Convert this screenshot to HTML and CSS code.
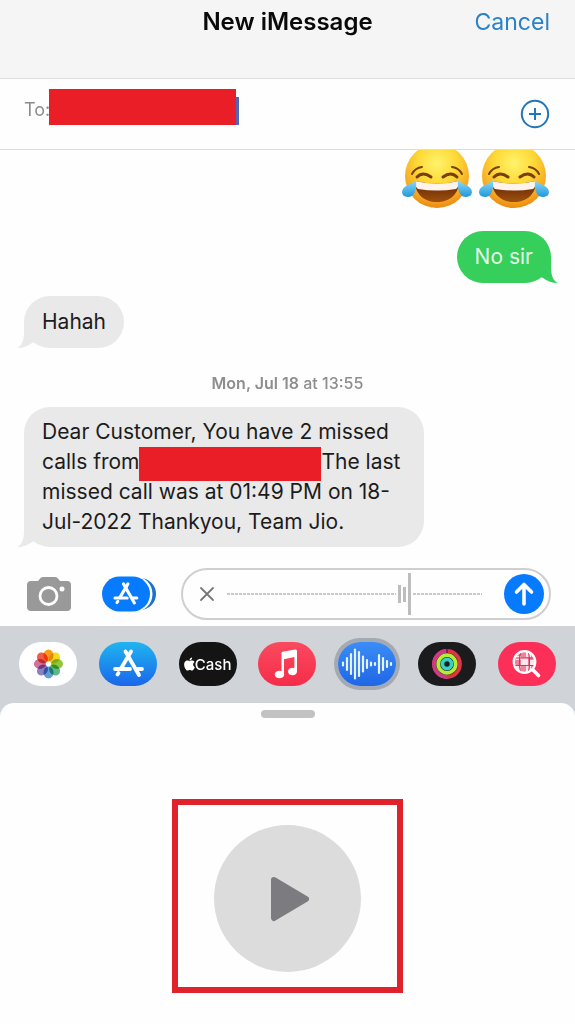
FILE: index.html
```html
<!doctype html>
<html lang="en">
  <head>
    <meta charset="UTF-8" />
    <meta name="viewport" content="width=device-width, initial-scale=1.0" />
    <title>New iMessage</title>
    <link rel="stylesheet" href="styles.css">
  </head>
  <body>
    <!-- shared shapes -->
    <svg class="defs" width="0" height="0" aria-hidden="true">
      <defs>
        <radialGradient id="face" cx="50%" cy="30%" r="72%">
          <stop offset="0" stop-color="#fff36b" />
          <stop offset="0.45" stop-color="#fdd835" />
          <stop offset="0.8" stop-color="#f6a623" />
          <stop offset="1" stop-color="#e8850c" />
        </radialGradient>
        <linearGradient id="tear" x1="0" y1="0" x2="0" y2="1">
          <stop offset="0" stop-color="#8fdcf8" />
          <stop offset="1" stop-color="#1f97dc" />
        </linearGradient>
        <linearGradient id="mouth" x1="0" y1="0" x2="0" y2="1">
          <stop offset="0" stop-color="#5e2606" />
          <stop offset="1" stop-color="#a04f0c" />
        </linearGradient>
      </defs>
      <symbol id="joy" viewBox="0 0 70 66">
        <circle cx="35" cy="33" r="32" fill="url(#face)" />
        <g fill="none" stroke="#7a3e06" stroke-linecap="round">
          <path d="M10 31Q13 25 20 24M50 24Q57 25 60 31" stroke-width="2" />
          <path d="M15 34Q21 28 29 34M41 34Q49 28 55 34" stroke-width="3" />
        </g>
        <path d="M13 38Q35 43 57 38C57 51 48 59 35 59S13 51 13 38Z" fill="url(#mouth)" />
        <path d="M13 38Q35 43 57 38Q57 44 54 46Q35 49 16 46Q13 44 13 38Z" fill="#fff3ec" />
        <path d="M14 37C15 47 12 54 6 54C0 54 -1 49 1 46C4 41 10 42 14 37Z" fill="url(#tear)" />
        <path d="M56 37C55 47 58 54 64 54C70 54 71 49 69 46C66 41 60 42 56 37Z" fill="url(#tear)" />
      </symbol>
      <symbol id="store" viewBox="0 0 58 44">
        <g fill="none" stroke="#fff" stroke-width="3.8" stroke-linecap="round">
          <path d="M26.5 9.5L40 33" />
          <path d="M32 9.500L22 26.500" />
          <path d="M19.500 31L18.500 32.500" />
          <path d="M16 27H31M38 27H43" />
        </g>
      </symbol>
      <symbol id="tail" viewBox="0 0 22 30">
        <path d="M7 2V13C7 21 5 27 0 29C6 29 11 27 15 24L20 22V2Z" />
      </symbol>
    </svg>

    <header class="header">
      <h1 class="title">New iMessage</h1>
      <button type="button" class="cancel">Cancel</button>
    </header>

    <div class="to-row">
      <label class="to-label" for="recipient">To:</label>
      <span class="redacted redacted-to"></span>
      <span class="caret"></span>
      <input class="recipient" id="recipient" type="text" />
      <button type="button" class="add" aria-label="Add contact">
        <svg width="30" height="30" viewBox="0 0 30 30" fill="none" stroke="#2377b8" stroke-width="2">
          <circle cx="15" cy="15" r="13.200" />
          <path d="M15 9V21M9 15H21" />
        </svg>
      </button>
    </div>

    <main class="thread">
      <div class="emoji-row">
        <svg width="70" height="66"><use href="#joy" /></svg>
        <svg width="70" height="66"><use href="#joy" /></svg>
      </div>

      <p class="bubble sent">
        No sir
        <svg class="tail" width="22" height="30" viewBox="0 0 22 30" fill="#37cf5c" aria-hidden="true">
          <path d="M15 2V13C15 21 17 27 22 29C16 29 11 27 7 24L2 22V2Z" />
        </svg>
      </p>

      <p class="bubble received">
        Hahah
        <svg class="tail" width="22" height="30" fill="#e9e9e9" aria-hidden="true"><use href="#tail" /></svg>
      </p>

      <p class="date"><strong>Mon, Jul 18</strong> at 13:55</p>

      <p class="bubble received long">
        Dear Customer, You have 2 missed<br />
        calls from<span class="redacted redacted-number"></span>The last<br />
        missed call was at 01:49 PM on 18-<br />
        Jul-2022 Thankyou, Team Jio.
        <svg class="tail" width="22" height="30" fill="#e9e9e9" aria-hidden="true"><use href="#tail" /></svg>
      </p>
    </main>

    <div class="compose">
      <button type="button" class="icon-button" aria-label="Camera">
        <svg width="44" height="36" viewBox="0 0 44 36">
          <path d="M4 5H11L14 1.500Q15 1 16 1H28Q29 1 30 1.500L33 5H40Q44 5 44 9V31Q44 35 40 35H4Q0 35 0 31V9Q0 5 4 5Z" fill="#999" />
          <circle cx="21.500" cy="20" r="8.500" fill="none" stroke="#fff" stroke-width="2.800" />
          <circle cx="35" cy="13" r="2.500" fill="#fff" />
        </svg>
      </button>
      <button type="button" class="icon-button" aria-label="Apps">
        <svg width="54" height="36" viewBox="0 0 54 36">
          <rect x="18" y="2" width="36" height="32" rx="16" fill="#1a6fd0" />
          <rect x="0" y="0" width="50.500" height="36" rx="18" fill="#fefefe" />
          <rect x="0" y="0.500" width="48" height="35" rx="17.500" fill="#077bff" />
          <use href="#store" x="0" y="0" width="47" height="36" />
        </svg>
      </button>
      <div class="recorder">
        <button type="button" class="icon-button" aria-label="Discard">
          <svg width="16" height="16" viewBox="0 0 16 16" fill="none" stroke="#777" stroke-width="1.800" stroke-linecap="round">
            <path d="M2 2L14 14M14 2L2 14" />
          </svg>
        </button>
        <div class="wave">
          <span class="dash before"></span>
          <span class="bar"></span>
          <span class="bar small"></span>
          <span class="bar playhead"></span>
          <span class="dash after"></span>
        </div>
        <button type="button" class="icon-button" aria-label="Send">
          <svg width="40" height="40" viewBox="0 0 40 40">
            <circle cx="20" cy="20" r="20" fill="#077bff" />
            <path d="M20 30V11M12.500 18L20 10.500L27.500 18" fill="none" stroke="#fff" stroke-width="3.600" stroke-linecap="round" stroke-linejoin="round" />
          </svg>
        </button>
      </div>
    </div>

    <nav class="apps">
      <button type="button" class="app photos" aria-label="Photos">
        <svg width="58" height="44" viewBox="0 0 58 44">
          <g class="petals" transform="translate(29.500 22)">
            <ellipse cy="-8.500" rx="5" ry="6" fill="#f79a1a" />
            <ellipse cy="-8.500" rx="5" ry="6" fill="#f0dc20" transform="rotate(45)" />
            <ellipse cy="-8.500" rx="5" ry="6" fill="#8fc63c" transform="rotate(90)" />
            <ellipse cy="-8.500" rx="5" ry="6" fill="#5cb888" transform="rotate(135)" />
            <ellipse cy="-8.500" rx="5" ry="6" fill="#5f9fd4" transform="rotate(180)" />
            <ellipse cy="-8.500" rx="5" ry="6" fill="#8a80c4" transform="rotate(225)" />
            <ellipse cy="-8.500" rx="5" ry="6" fill="#d0709f" transform="rotate(270)" />
            <ellipse cy="-8.500" rx="5" ry="6" fill="#f05c44" transform="rotate(315)" />
          </g>
        </svg>
      </button>
      <button type="button" class="app store" aria-label="App Store">
        <svg width="58" height="44"><use href="#store" /></svg>
      </button>
      <button type="button" class="app cash">
        <svg width="11" height="14" viewBox="2 0 20 24" aria-hidden="true">
          <path fill="#fff" d="M12.152 6.896c-.948 0-2.415-1.078-3.960-1.040-2.040.027-3.910 1.183-4.961 3.014-2.117 3.675-.546 9.103 1.519 12.090 1.013 1.454 2.208 3.090 3.792 3.039 1.520-.065 2.090-.987 3.935-.987 1.831 0 2.350.987 3.960.948 1.637-.026 2.676-1.480 3.676-2.948 1.156-1.688 1.636-3.325 1.662-3.415-.039-.013-3.182-1.221-3.220-4.857-.026-3.040 2.480-4.494 2.597-4.559-1.429-2.090-3.623-2.324-4.390-2.376-2-.156-3.675 1.090-4.610 1.090zM15.530 3.830c.843-1.012 1.400-2.427 1.245-3.830-1.207.052-2.662.805-3.532 1.818-.780.896-1.454 2.338-1.273 3.714 1.338.104 2.715-.688 3.559-1.701" />
        </svg>
        Cash
      </button>
      <button type="button" class="app music" aria-label="Music">
        <svg width="58" height="44" viewBox="0 0 58 44">
          <path d="M23.500 11Q23.500 10 24.500 9.700L37 7.500Q39 7 39 9V29H36.400V15L26 17.200V32H23.500Z" fill="#fff" />
          <ellipse cx="21.500" cy="32.500" rx="4.700" ry="3.800" fill="#fff" />
          <ellipse cx="34.500" cy="29.500" rx="4.500" ry="3.800" fill="#fff" />
        </svg>
      </button>
      <button type="button" class="app audio" aria-label="Audio message">
        <svg width="58" height="44" viewBox="0 0 58 44" fill="none" stroke="#e2f4ff" stroke-width="2.200" stroke-linecap="round">
          <path d="M5 20.500V23.500M9 16V28M13 12V32M17 7.500V36.500M21 10V34M25 14.500V29.500M29 18V26M33 20.500V23.500M37 21V23M41 13V31M45 16V28M49 19V25M53 21V23" />
        </svg>
      </button>
      <button type="button" class="app activity" aria-label="Activity">
        <svg width="58" height="44" viewBox="0 0 58 44" fill="none" stroke-width="3.800">
          <circle cx="29" cy="22" r="13" stroke="#df3442" />
          <path d="M29 9A13 13 0 0 0 29 35" stroke="#cc3c86" />
          <path d="M29 7V12" stroke="#1b1b1d" stroke-width="1" />
          <circle cx="29" cy="22" r="8.800" stroke="#b5ec3a" />
          <circle cx="29" cy="22" r="4.600" stroke="#35d3c4" />
        </svg>
      </button>
      <button type="button" class="app images" aria-label="Image search">
        <svg width="58" height="44" viewBox="0 0 58 44" fill="none">
          <circle cx="26.500" cy="20" r="10.800" fill="#f0839b" />
          <path d="M18 14H23V18H18ZM28 10H33V15H28ZM23 16H30V23H23ZM31 18H37V23H31ZM18 24H23V28H18ZM28 24H33V30H28Z" fill="#ffe6ec" />
          <path d="M16 16H37M16 23.500H37M22.500 10Q20.500 20 22.500 30M30.500 10Q32.500 20 30.500 30" stroke="#d53358" stroke-width="1.200" />
          <circle cx="26.500" cy="20" r="10.800" stroke="#fff" stroke-width="2.200" />
          <path d="M35 28L40.500 33.500" stroke="#fff" stroke-width="3.600" stroke-linecap="round" />
        </svg>
      </button>
    </nav>

    <section class="panel">
      <span class="handle"></span>
      <div class="highlight">
        <button type="button" class="play" aria-label="Play">
          <svg width="44" height="48" viewBox="0 0 44 48">
            <path d="M6 5L38 24L6 43Z" fill="#7c7b80" stroke="#7c7b80" stroke-width="6" stroke-linejoin="round" />
          </svg>
        </button>
      </div>
    </section>
  </body>
</html>
```
FILE: styles.css
```css
* {
  margin: 0;
  padding: 0;
  box-sizing: border-box;
}

body {
  font-family: Inter, "Liberation Sans", sans-serif;
  background-color: #d0d3d7;
  color: #1c1c1c;
  display: flex;
  flex-direction: column;
  min-height: 100vh;
}

button {
  background: none;
  border: none;
  font-family: inherit;
  cursor: pointer;
}

svg {
  display: block;
}

.defs {
  position: absolute;
}

.header {
  display: grid;
  grid-template-columns: 1fr auto 1fr;
  align-items: start;
  height: 79px;
  padding: 7px 25px 0;
  background-color: #f5f5f5;
  border-bottom: 1px solid #dedede;
}

.title {
  grid-column: 2;
  font-size: 24px;
  font-weight: 600;
  line-height: 30px;
  color: #0a0a0a;
}

.cancel {
  justify-self: end;
  font-size: 23px;
  line-height: 30px;
  color: #2b82c9;
}

.to-row {
  display: flex;
  align-items: flex-start;
  height: 71px;
  padding: 10px 25px 0 24px;
  background-color: #fefefe;
  border-bottom: 1px solid #dcdcdc;
}

.to-label {
  width: 25px;
  padding-top: 6px;
  font-size: 18px;
  line-height: 30px;
  color: #8c8c8c;
}

.redacted {
  background-color: #ea1e26;
}

.redacted-to {
  width: 187px;
  height: 36px;
}

.caret {
  width: 3px;
  height: 28px;
  margin-top: 8px;
  background-color: #5266b5;
}

.recipient {
  flex: 1;
  min-width: 0;
  height: 36px;
  border: none;
  outline: none;
  background: none;
  font-size: 18px;
}

.add {
  margin-top: 10px;
}

.thread {
  display: flex;
  flex-direction: column;
  align-items: flex-start;
  overflow: hidden;
  padding: 0 24px 21px;
  background-color: #fefefe;
}

.emoji-row {
  display: flex;
  gap: 7px;
  align-self: flex-end;
  margin: -7px 2px 0 0;
}

.bubble {
  position: relative;
  padding: 11px 18px;
  border-radius: 26px;
  font-size: 21px;
  line-height: 30px;
}

.sent {
  align-self: flex-end;
  margin-top: 22px;
  background-color: #37cf5c;
  color: #e4f9e8;
}

.received {
  margin-top: 13px;
  background-color: #e9e9e9;
}

.tail {
  position: absolute;
  bottom: -1px;
}

.sent .tail {
  right: -7px;
}

.received .tail {
  left: -7px;
}

.date {
  align-self: center;
  margin-top: 25px;
  font-size: 16px;
  font-weight: 500;
  line-height: 20px;
  color: #8e8e8e;
}

.date strong {
  font-weight: 600;
}

.long {
  margin-top: 14px;
  padding: 10px 24px 10px 18px;
  white-space: nowrap;
}

.redacted-number {
  display: inline-block;
  width: 182px;
  height: 34px;
  margin-bottom: -4px;
  vertical-align: top;
}

.compose {
  display: flex;
  align-items: center;
  padding: 0 24px 6px 27px;
  background-color: #fefefe;
}

.icon-button {
  flex: none;
}

.icon-button + .icon-button {
  margin-left: 31px;
}

.recorder {
  flex: 1;
  display: flex;
  align-items: center;
  height: 52px;
  margin-left: 25px;
  padding: 0 5px 0 16px;
  border: 2px solid #cfcfcf;
  border-radius: 26px;
}

.wave {
  flex: 1;
  display: flex;
  align-items: center;
  gap: 2px;
  margin: 0 22px 0 12px;
}

.dash {
  height: 2px;
  background: repeating-linear-gradient(90deg, #c9c9c9 0 3px, #fefefe 3px 4px);
}

.before {
  flex: 171;
}

.after {
  flex: 70;
}

.bar {
  width: 3px;
  height: 18px;
  background-color: #bdbdbd;
}

.small {
  height: 15px;
}

.playhead {
  height: 42px;
}

.apps {
  display: flex;
  justify-content: space-between;
  padding: 16px 19px 17px;
  background-color: #d0d3d7;
}

.app {
  display: flex;
  align-items: center;
  justify-content: center;
  width: 58px;
  height: 44px;
  border-radius: 22px;
}

.photos {
  background-color: #fff;
}

.petals ellipse {
  mix-blend-mode: multiply;
}

.store {
  background: linear-gradient(#1fb5f0, #1a66ea);
}

.cash {
  background-color: #141414;
  color: #fff;
  font-size: 15px;
  font-weight: 500;
}

.music {
  background: linear-gradient(#fa4a60, #f62c48);
}

.audio {
  background: linear-gradient(#3b8df5, #1f66e6);
  box-shadow: 0 0 0 4px #a5a9b2;
}

.activity {
  background-color: #1b1b1d;
}

.images {
  background-color: #fb2f58;
}

.panel {
  flex: 1;
  display: flex;
  flex-direction: column;
  align-items: center;
  padding: 7px 0 30px;
  background-color: #fefefe;
  border-radius: 14px 14px 0 0;
}

.handle {
  width: 54px;
  height: 8px;
  border-radius: 4px;
  background-color: #c2c2c2;
}

.highlight {
  margin-top: 81px;
  padding: 20px 36px 15px;
  border: 6px solid #e0222b;
}

.play {
  display: flex;
  align-items: center;
  justify-content: center;
  width: 147px;
  height: 147px;
  padding-left: 4px;
  border-radius: 50%;
  background-color: #dcdcdc;
}
```
